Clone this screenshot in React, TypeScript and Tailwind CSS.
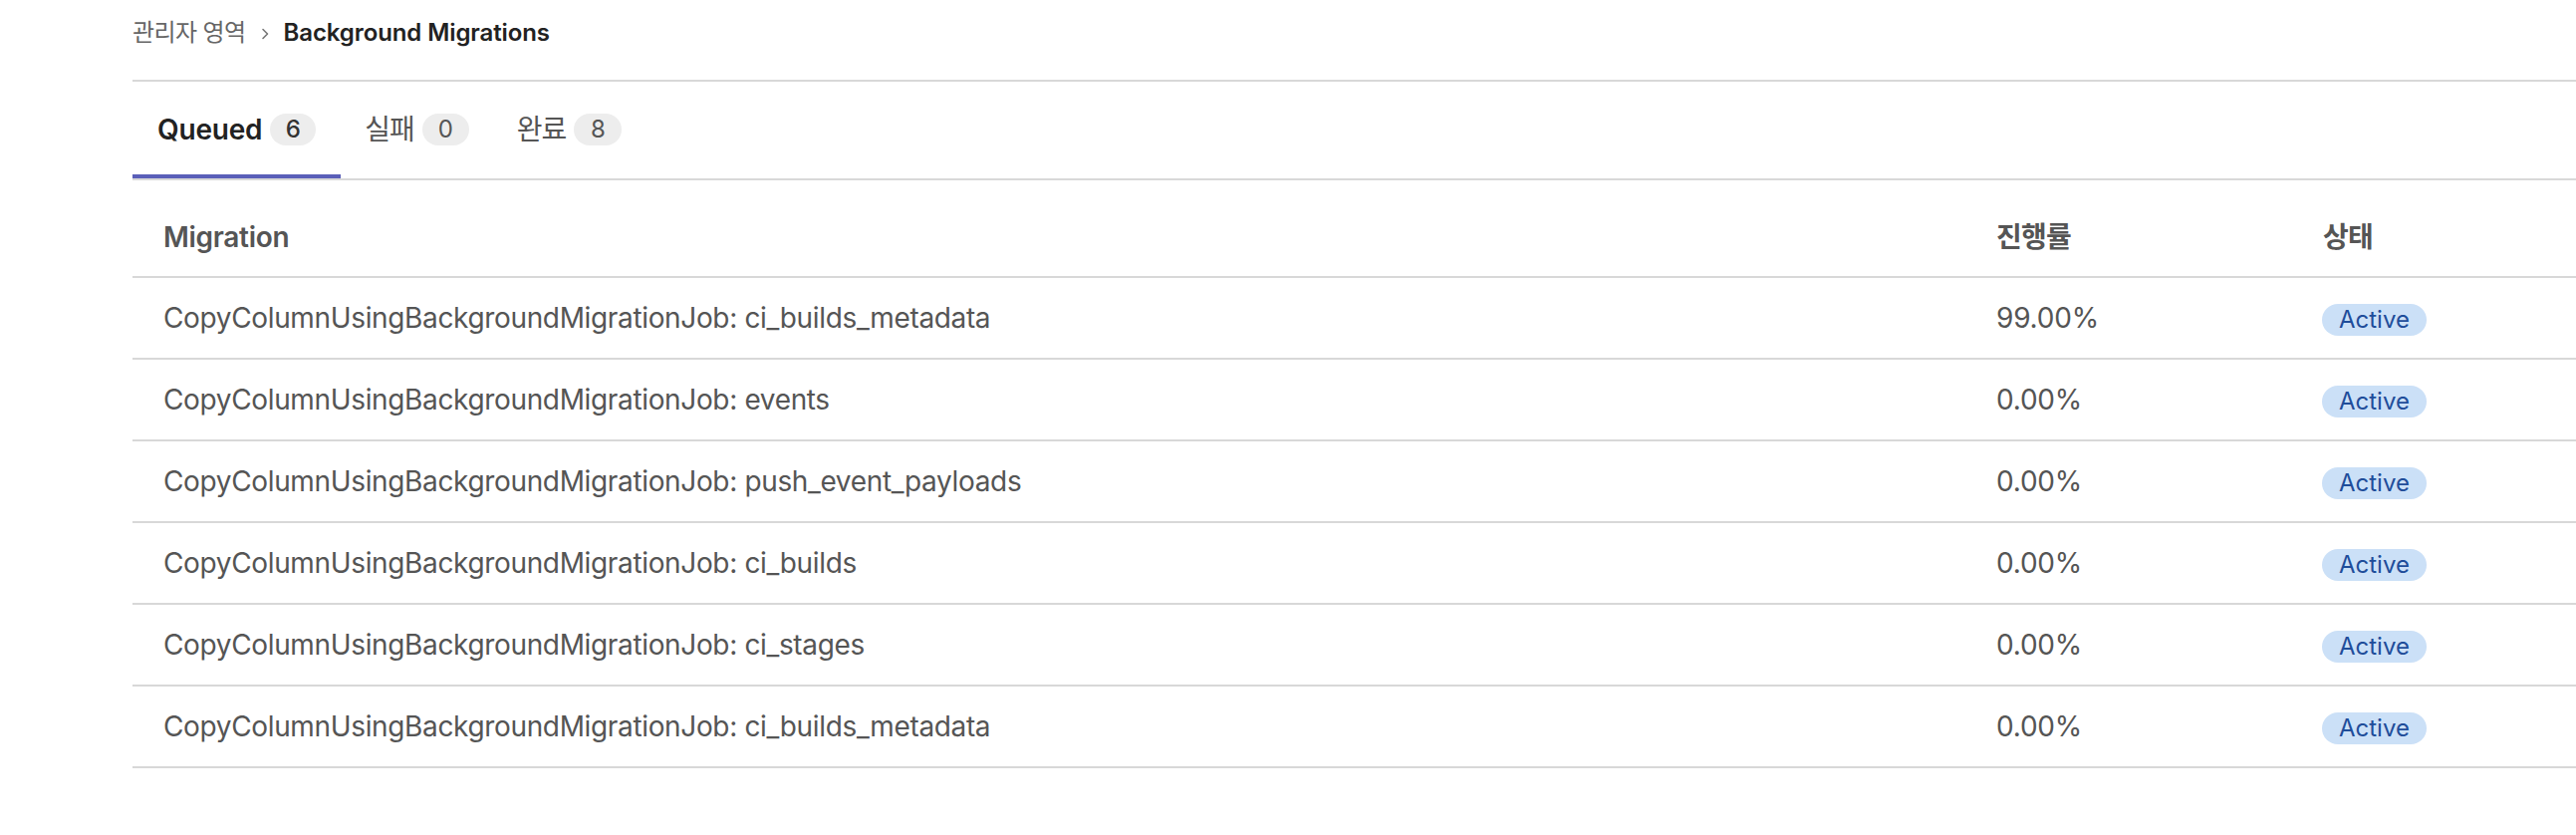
import React from "react";

const rows = [
  { name: "CopyColumnUsingBackgroundMigrationJob: ci_builds_metadata", progress: "99.00%" },
  { name: "CopyColumnUsingBackgroundMigrationJob: events", progress: "0.00%" },
  { name: "CopyColumnUsingBackgroundMigrationJob: push_event_payloads", progress: "0.00%" },
  { name: "CopyColumnUsingBackgroundMigrationJob: ci_builds", progress: "0.00%" },
  { name: "CopyColumnUsingBackgroundMigrationJob: ci_stages", progress: "0.00%" },
  { name: "CopyColumnUsingBackgroundMigrationJob: ci_builds_metadata", progress: "0.00%" },
];

const font = { fontFamily: '"Inter", "Noto Sans CJK KR", sans-serif' };

export default function App() {
  return (
    <div className="min-h-[838px] w-full bg-white pl-[133px]" style={font}>
      {/* Breadcrumb */}
      <div className="flex h-[80px] items-start pt-[16px] text-[24px] leading-[34px]">
        <span className="tracking-[-0.6px] text-[#666666]">관리자 영역</span>
        <svg className="ml-[14px] mr-[14px] mt-[12px]" width="10" height="12" viewBox="0 0 10 12" fill="none">
          <path d="M3 1.5L7.5 6L3 10.5" stroke="#777777" strokeWidth="1.6" strokeLinecap="round" strokeLinejoin="round" />
        </svg>
        <span className="font-semibold tracking-[-0.1px] text-[#222222]">Background Migrations</span>
      </div>
      <div className="h-[2px] bg-[#d8d8d8]" />

      {/* Tabs */}
      <div className="flex h-[99px] border-b-2 border-[#d8d8d8]">
        <div className="relative flex items-center gap-[8px] px-[25px] pb-[2px]">
          <span className="text-[28px] font-semibold tracking-[-0.2px] text-[#222222]">Queued</span>
          <span className="flex h-[32px] w-[46px] items-center justify-center rounded-full bg-[#ededed] text-[24px] font-medium text-[#333333]">6</span>
          <div className="absolute bottom-0 left-0 right-0 h-[4px] bg-[#5a5fb8]" />
        </div>
        <div className="flex items-center gap-[8px] px-[24px] pb-[2px]">
          <span className="text-[28px] tracking-[-1px] text-[#555555]">실패</span>
          <span className="flex h-[32px] w-[47px] items-center justify-center rounded-full bg-[#ededed] text-[24px] text-[#555555]">0</span>
        </div>
        <div className="flex items-center gap-[8px] px-[24px] pb-[2px]">
          <span className="text-[28px] tracking-[-1px] text-[#555555]">완료</span>
          <span className="flex h-[32px] w-[48px] items-center justify-center rounded-full bg-[#ededed] text-[24px] text-[#555555]">8</span>
        </div>
      </div>

      {/* Table */}
      <div className="grid h-[98px] grid-cols-[1837px_328px_1fr] items-center border-b-2 border-[#d8d8d8] pt-[18px] text-[28px] font-semibold text-[#555555]">
        <div className="px-[31px] tracking-[-0.3px]">Migration</div>
        <div className="px-[34px] tracking-[-0.8px]">진행률</div>
        <div className="px-[34px] tracking-[-0.8px]">상태</div>
      </div>
      {rows.map((r, i) => (
        <div
          key={i}
          className="grid h-[82px] grid-cols-[1837px_328px_1fr] items-center border-b-2 border-[#d8d8d8] text-[28px] text-[#555555]"
        >
          <div className="px-[31px] tracking-[-0.35px]">{r.name}</div>
          <div className="px-[34px] tracking-[-0.2px]">{r.progress}</div>
          <div className="px-[33px]">
            <span className="inline-flex h-[32px] items-center rounded-full bg-[#cbe0f7] px-[17px] text-[24px] text-[#1f4d9a]">
              Active
            </span>
          </div>
        </div>
      ))}
    </div>
  );
}
